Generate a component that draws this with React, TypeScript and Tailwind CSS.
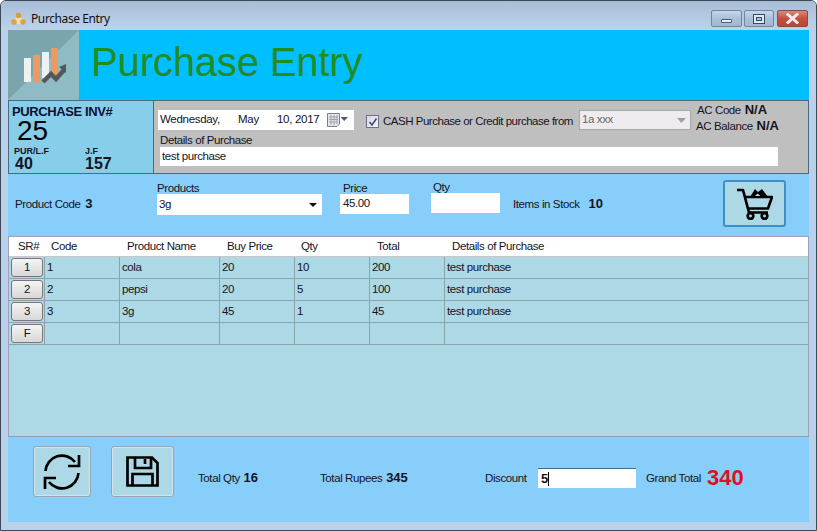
import React from "react";

const rows = [
  { sr: "1", code: "1", name: "cola", price: "20", qty: "10", total: "200", det: "test purchase" },
  { sr: "2", code: "2", name: "pepsi", price: "20", qty: "5", total: "100", det: "test purchase" },
  { sr: "3", code: "3", name: "3g", price: "45", qty: "1", total: "45", det: "test purchase" },
  { sr: "F", code: "", name: "", price: "", qty: "", total: "", det: "" },
];

const cols = ["w-[75px]", "w-[100px]", "w-[75px]", "w-[75px]", "w-[75px]", "flex-1"];
const headPad = ["pl-[7px]", "pl-[8px]", "pl-[8px]", "pl-[7px]", "pl-[8px]", "pl-[8px]"];

function WinButton({ kind }: { kind: "min" | "max" | "close" }) {
  const base =
    kind === "close"
      ? "w-[31px] bg-gradient-to-b from-[#d98a7c] via-[#c4503f] to-[#b5483a] border-[#8a4a44]"
      : "bg-gradient-to-b from-[#c5d6ea] via-[#a9c0da] to-[#a0b8d3] border-[#75859a]";
  const w = kind === "min" ? "w-[31px]" : kind === "max" ? "w-[30px]" : "";
  return (
    <div className={`${base} ${w} h-[17px] border rounded-[2px] flex items-center justify-center`}>
      {kind === "min" && <div className="w-[11px] h-[4px] mt-[5px] bg-[#e8eef5] border border-[#4a5a70] rounded-[1px]" />}
      {kind === "max" && (
        <div className="w-[12px] h-[10px] border border-[#3c4a60] bg-[#dfe8f2] flex items-center justify-center">
          <div className="w-[6px] h-[4px] border border-[#3c4a60] bg-[#a9c0da]" />
        </div>
      )}
      {kind === "close" && (
        <svg width="13" height="11" viewBox="0 0 13 11">
          <path d="M2 1.5 L11 9.5 M11 1.5 L2 9.5" stroke="#f4ecea" strokeWidth="3" strokeLinecap="square" />
        </svg>
      )}
    </div>
  );
}

function Logo() {
  return (
    <svg width="71" height="70" viewBox="0 0 71 70" className="shrink-0">
      <rect width="71" height="70" fill="#8fbcc4" />
      <path d="M0 70 L71 0 L0 0 Z" fill="#7ba5ac" />
      <rect x="16" y="28" width="7" height="24" fill="#eef1f2" />
      <rect x="25" y="25" width="7" height="27" fill="#ee9a5e" />
      <rect x="34" y="22" width="7" height="26" fill="#eef1f2" />
      <rect x="43" y="18" width="7" height="27" fill="#ee9a5e" />
      <path d="M35 52 L43 44 L48 49 L56 40" fill="none" stroke="#55585a" strokeWidth="4.5" />
      <path d="M51 37 L58 34 L58 43 Z" fill="#55585a" />
    </svg>
  );
}

export default function App() {
  return (
    <div className="w-[817px] h-[531px] overflow-hidden bg-[#b9d1ea] border border-[#3b4a55] rounded-t-[6px] font-['Liberation_Sans',sans-serif] text-[11.5px] tracking-[-0.4px] text-[#14141e] flex flex-col">
      <div className="h-[29px] shrink-0 bg-gradient-to-b from-[#a9bdd6] to-[#bcd3ec] flex items-start pt-[9px] pl-[9px] pr-[8px]">
        <svg width="17" height="15" viewBox="0 0 17 15" className="mt-[1px]">
          <path d="M8.5 2 L2 13 H15 Z" fill="#eedfae" />
          <circle cx="8.5" cy="4.5" r="2.7" fill="#d2a040" />
          <circle cx="4" cy="11" r="2.8" fill="#dca445" />
          <circle cx="13" cy="11" r="2.8" fill="#dca445" />
        </svg>
        <span className="ml-[4px] font-['Noto_Sans',sans-serif] text-[12px] leading-[17px] text-[#111]">Purchase Entry</span>
        <div className="ml-auto flex">
          <WinButton kind="min" />
          <div className="w-[2px]" />
          <WinButton kind="max" />
          <div className="w-[3px]" />
          <WinButton kind="close" />
        </div>
      </div>

      <div className="mx-[7px] w-[801px] flex-1 flex flex-col bg-[#87cefa] min-h-0">
        <div className="h-[70px] shrink-0 bg-[#00bfff] flex items-center">
          <Logo />
          <div className="ml-[12px] text-[40px] tracking-[-0.15px] leading-none text-[#228b22] mb-[6px]">Purchase Entry</div>
        </div>

        <div className="h-[74px] shrink-0 flex border border-[#4a6a80]">
          <div className="w-[145px] shrink-0 bg-[#87ceeb] border-r border-[#4a6a80] pl-[3px] pt-[3px] flex flex-col">
            <div className="text-[13px] leading-[15px] font-bold text-[#101030]">PURCHASE INV#</div>
            <div className="ml-[5px] text-[28px] tracking-normal leading-[23px] text-black">25</div>
            <div className="flex mt-[5px] ml-[2px] text-[9px] tracking-normal leading-[9px] font-bold">
              <span className="w-[71px]">PUR/L.F</span>
              <span>J.F</span>
            </div>
            <div className="flex ml-[3px] text-[16px] tracking-normal leading-[15px] font-bold">
              <span className="w-[70px]">40</span>
              <span>157</span>
            </div>
          </div>
          <div className="flex-1 bg-[#c0bfc0] pl-[4px] pt-[9px]">
            <div className="h-[20px] flex items-start">
              <div className="w-[196px] h-[20px] bg-white flex items-center pl-[2px] pr-[4px] tracking-[-0.3px]">
                <span className="w-[78px]">Wednesday,</span>
                <span className="w-[39px]">May</span>
                <span>10, 2017</span>
                <svg width="24" height="14" viewBox="0 0 24 14" className="ml-auto">
                  <path d="M1.5 0.5 H13.5 V11 L11 13.5 H1.5 Z" fill="#e3e6ea" stroke="#7a8088" />
                  <path d="M3 4 H12 M3 6.5 H12 M3 9 H12 M5 2 V12 M8 2 V12 M11 2 V11" stroke="#a0a6ac" />
                  <path d="M14.5 4 H22 L18.25 8 Z" fill="#4a5a78" />
                </svg>
              </div>
              <div className="ml-[12px] mt-[5px] w-[13px] h-[13px] bg-gradient-to-br from-[#d5d8de] to-[#f4f5f7] border border-[#6d7480] flex items-center justify-center">
                <svg width="10" height="10" viewBox="0 0 10 10">
                  <path d="M1.5 5 L4 8 L8.5 1.5" fill="none" stroke="#3c4a8c" strokeWidth="1.6" />
                </svg>
              </div>
              <span className="ml-[4px] mt-[4px] leading-[14px] w-[196px] shrink-0 whitespace-nowrap tracking-[-0.48px]">CASH Purchase or Credit purchase from</span>
              <div className="w-[112px] h-[20px] shrink-0 bg-[#eeecee] border border-[#a8a8a8] flex items-center pl-[2px] text-[#666]">
                <span>1a xxx</span>
                <svg width="9" height="5" viewBox="0 0 9 5" className="ml-auto mr-[4px]">
                  <path d="M0 0 H9 L4.5 5 Z" fill="#a0a0a0" />
                </svg>
              </div>
              <div className="ml-[5px] -mt-[8px] leading-[15px] whitespace-nowrap">
                <div className="ml-[1px]">
                  AC Code <b className="ml-[1px] text-[13px] tracking-normal">N/A</b>
                </div>
                <div>
                  AC Balance <b className="ml-[1px] text-[13px] tracking-normal">N/A</b>
                </div>
              </div>
            </div>
            <div className="ml-[2px] mt-[4px] leading-[13px]">Details of Purchase</div>
            <div className="ml-[2px] w-[618px] h-[19px] bg-white flex items-center pl-[2px]">test purchase</div>
          </div>
        </div>

        <div className="h-[62px] shrink-0 flex">
          <div className="ml-[7px] w-[142px] shrink-0 mt-[23px] leading-[14px]">
            Product Code <b className="ml-[2px] text-[13px] tracking-normal">3</b>
          </div>
          <div className="mt-[7px] flex flex-col">
            <span className="h-[13px] leading-[15px]">Products</span>
            <div className="w-[165px] h-[21px] bg-white flex items-center pl-[2px] pr-[5px]">
              <span>3g</span>
              <svg width="8" height="4" viewBox="0 0 8 4" className="ml-auto">
                <path d="M0 0 H8 L4 4 Z" fill="#111" />
              </svg>
            </div>
          </div>
          <div className="ml-[18px] mt-[7px] flex flex-col">
            <span className="ml-[3px] h-[13px] leading-[15px]">Price</span>
            <div className="w-[69px] h-[20px] bg-white flex items-center pl-[3px]">45.00</div>
          </div>
          <div className="ml-[22px] mt-[6px] flex flex-col">
            <span className="ml-[2px] h-[13px] leading-[14px]">Qty</span>
            <div className="w-[69px] h-[20px] bg-white" />
          </div>
          <div className="ml-[13px] w-[210px] shrink-0 mt-[23px] leading-[14px]">
            Items in Stock <b className="ml-[6px] text-[13px] tracking-normal">10</b>
          </div>
          <div className="mt-[6px] w-[63px] h-[47px] bg-[#add8e6] border-2 border-[#3f8fc4] rounded-[3px] flex items-center justify-center">
            <svg width="36" height="32" viewBox="0 0 36 32">
              <path d="M0 2 H6 L12 24.5 H31" fill="none" stroke="#000" strokeWidth="2.7" strokeLinejoin="round" />
              <path d="M7 9 H35 L31 20.5 H10" fill="none" stroke="#000" strokeWidth="2.7" strokeLinejoin="round" />
              <path d="M13 9 L18 1 L21 4 L25 1 L31 9 Z" fill="#000" />
              <path d="M18 8 L20.5 5.5 L23.5 8 Z" fill="#add8e6" />
              <circle cx="13.5" cy="28" r="2.8" fill="none" stroke="#000" strokeWidth="2.7" />
              <circle cx="27.5" cy="28" r="2.8" fill="none" stroke="#000" strokeWidth="2.7" />
            </svg>
          </div>
        </div>

        <div className="h-[200px] shrink-0 bg-[#add8e6] border-t border-l border-r border-[#a0a0b8]">
          <div className="h-[20px] bg-white flex items-center border-b border-[#c8c8c8]">
            <div className="w-[35px] pl-[9px]">SR#</div>
            {["Code", "Product Name", "Buy Price", "Qty", "Total", "Details of Purchase"].map((h, i) => (
              <div key={h} className={`${cols[i]} ${headPad[i]}`}>
                {h}
              </div>
            ))}
          </div>
          {rows.map((r) => (
            <div key={r.sr} className="h-[22px] flex border-b border-[#8ba3ac]">
              <div className="w-[35px] flex items-center pl-[2px]">
                <div className="w-[32px] h-[19px] pt-[1px] bg-gradient-to-b from-[#f4f4f4] to-[#d8d8d8] border border-[#777] rounded-[3px] flex items-center justify-center">
                  {r.sr}
                </div>
              </div>
              {[r.code, r.name, r.price, r.qty, r.total, r.det].map((c, i) => (
                <div key={i} className={`${cols[i]} border-l border-[#8ba3ac] pl-[2px] pt-[1px] flex items-center`}>
                  {c}
                </div>
              ))}
            </div>
          ))}
        </div>

        <div className="flex-1 flex border-t border-[#8ba3ac]">
          <div className="ml-[25px] mt-[9px] w-[58px] h-[51px] shrink-0 bg-[#add8e6] border border-[#98a5af] shadow-[inset_0_0_0_1px_#d8e2ea] rounded-[3px] flex items-center justify-center">
            <svg width="38" height="38" viewBox="0 0 38 38">
              <path d="M2.5 18 A16.5 16.5 0 0 1 32 9" fill="none" stroke="#000" strokeWidth="2.7" />
              <path d="M35.5 20 A16.5 16.5 0 0 1 6 29" fill="none" stroke="#000" strokeWidth="2.7" />
              <path d="M36 2 V13 H25" fill="none" stroke="#000" strokeWidth="2.7" />
              <path d="M2 36 V25 H13" fill="none" stroke="#000" strokeWidth="2.7" />
            </svg>
          </div>
          <div className="ml-[20px] mt-[9px] w-[63px] h-[51px] shrink-0 bg-[#add8e6] border border-[#98a5af] shadow-[inset_0_0_0_1px_#d8e2ea] rounded-[3px] flex items-center justify-center">
            <svg width="33" height="31" viewBox="0 0 33 31">
              <path d="M1.5 1.5 H26 L31.5 7 V29.5 H1.5 Z" fill="none" stroke="#000" strokeWidth="2.7" />
              <path d="M9 1.5 V12 H25 V1.5" fill="none" stroke="#000" strokeWidth="2.7" />
              <path d="M19 3 V8" stroke="#000" strokeWidth="2.7" />
              <path d="M6.5 29.5 V18 H26.5 V29.5" fill="none" stroke="#000" strokeWidth="2.7" />
            </svg>
          </div>
          <div className="ml-[24px] w-[122px] shrink-0 mt-[34px] leading-[14px]">
            Total Qty <b className="ml-[1px] text-[13px] tracking-normal">16</b>
          </div>
          <div className="w-[165px] shrink-0 mt-[34px] leading-[14px]">
            Total Rupees <b className="ml-[1px] text-[13px] tracking-normal">345</b>
          </div>
          <div className="w-[53px] shrink-0 mt-[34px] leading-[14px]">Discount</div>
          <div className="mt-[31px] w-[98px] h-[20px] shrink-0 bg-white border-t border-[#3f6f99] flex items-center pl-[3px] text-[13px] font-bold">
            5<span className="w-px h-[14px] bg-black" />
          </div>
          <div className="ml-[10px] w-[61px] shrink-0 mt-[34px] leading-[14px]">Grand Total</div>
          <div className="mt-[28px] text-[22px] tracking-normal leading-[25px] font-bold text-[#e01020]">340</div>
        </div>
      </div>
      <div className="h-[8px] shrink-0" />
    </div>
  );
}
